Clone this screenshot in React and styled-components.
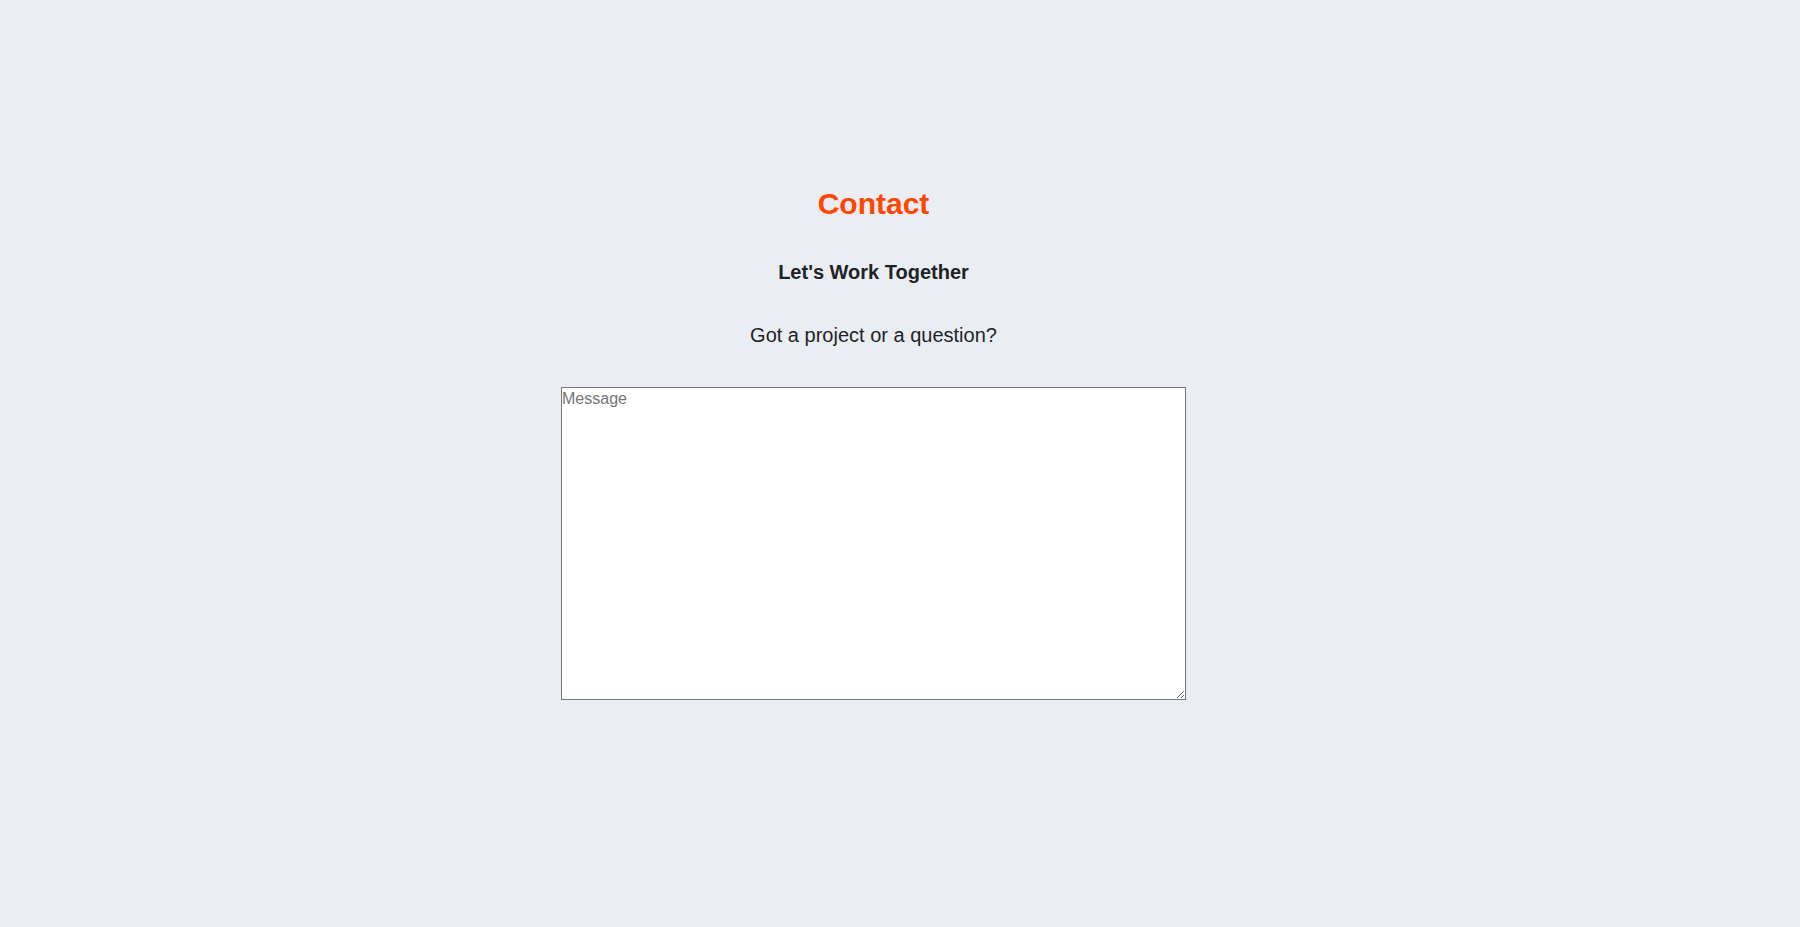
import styled, { createGlobalStyle } from "styled-components";

const GlobalStyle = createGlobalStyle`
  html,
  body {
    margin: 0;
    padding: 0;
    background-color: #eaeef2;
    font-family: "Liberation Sans", Arial, sans-serif;
  }
`;

const Page = styled.main`
  min-height: 100vh;
  box-sizing: border-box;
  padding: 187px 53px 0 0;
`;

const Section = styled.section`
  display: flex;
  flex-direction: column;
  align-items: center;
  text-align: center;
`;

const Title = styled.h2`
  margin: 0;
  font-size: 30px;
  font-weight: 700;
  color: #ff4500;
`;

const Subtitle = styled.h3`
  margin: 40px 0 0;
  font-size: 20px;
  font-weight: 700;
  color: #1f2328;
`;

const Lead = styled.p`
  margin: 40px 0 0;
  font-size: 20px;
  color: #1f2328;
`;

const Form = styled.form`
  margin-top: 40px;
  display: flex;
`;

const Message = styled.textarea`
  box-sizing: border-box;
  width: 625px;
  height: 313px;
  padding: 2px 0 0 0;
  border: 1px solid #767676;
  background: #fff;
  font-family: "Liberation Sans", Arial, sans-serif;
  font-size: 16px;
  color: #1f2328;

  &::placeholder {
    color: #757575;
  }
`;

const App = () => {
  return (
    <Page>
      <GlobalStyle />
      <Section>
        <Title>Contact</Title>
        <Subtitle>Let's Work Together</Subtitle>
        <Lead>Got a project or a question?</Lead>
        <Form onSubmit={(e) => e.preventDefault()}>
          <Message placeholder="Message" />
        </Form>
      </Section>
    </Page>
  );
};

export default App;
